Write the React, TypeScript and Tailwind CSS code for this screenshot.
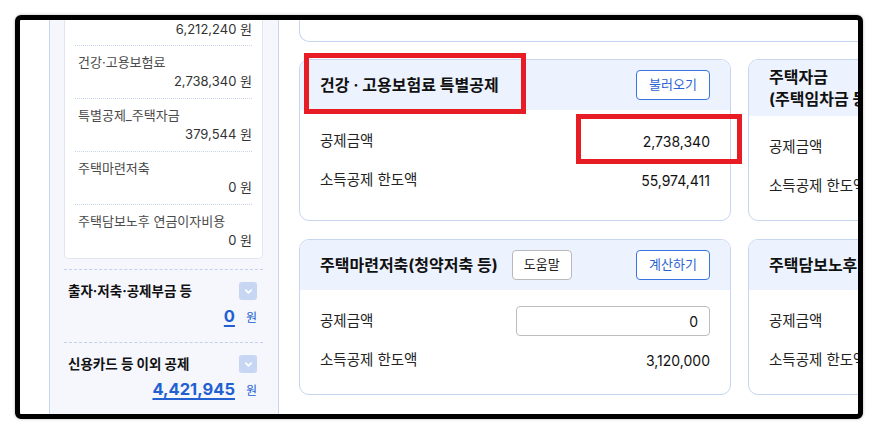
import { ChevronDown } from "lucide-react";

const font = { fontFamily: 'Inter, "Noto Sans CJK KR", "Noto Sans", sans-serif' };

const sideItems = [
  { label: "건강·고용보험료", value: "2,738,340" },
  { label: "특별공제_주택자금", value: "379,544" },
  { label: "주택마련저축", value: "0" },
  { label: "주택담보노후 연금이자비용", value: "0" },
];

function Badge() {
  return (
    <span className="flex h-[18px] w-[18px] shrink-0 items-center justify-center rounded-[3px] bg-[#c6d6f3]">
      <ChevronDown className="h-[11px] w-[11px] text-white" strokeWidth={3.5} />
    </span>
  );
}

function SideSection({ title, amount }: { title: string; amount: string }) {
  return (
    <div className="border-t border-dashed border-[#c3d1ec] pb-[13px] pl-[4px] pr-[6px] pt-[11px]">
      <div className="flex items-center leading-[20px]">
        <span className="flex-1 text-[13.5px] font-bold text-[#111]">{title}</span>
        <Badge />
      </div>
      <div className="mt-[4px] flex items-baseline justify-end gap-[11px] leading-[22px]">
        <span className="text-[16.5px] font-bold text-[#2260d2] underline decoration-[1.5px] underline-offset-[3px]">
          {amount}
        </span>
        <span className="text-[12px] text-[#2260d2]">원</span>
      </div>
    </div>
  );
}

function Sidebar() {
  return (
    <aside className="w-[230px] shrink-0 border-x border-[#c8d6ef] bg-[#f5f7fd] pl-[14px] pr-[15px]">
      <div className="rounded-b-[5px] border border-t-0 border-[#e0e6f1] bg-white px-[10px] text-[13px]">
        <div className="border-b border-dotted border-[#c9d3ea] pb-[6px] text-right leading-[19px] text-[#333]">
          6,212,240 원
        </div>
        {sideItems.map((item, i) => (
          <div
            key={item.label}
            className={`py-[7px] leading-[19px] ${
              i < sideItems.length - 1 ? "border-b border-dotted border-[#c9d3ea]" : "pb-[8px]"
            }`}
          >
            <div className="pl-[3px] text-[#4a4a4a]">{item.label}</div>
            <div className="text-right text-[#333]">{item.value} 원</div>
          </div>
        ))}
      </div>
      <div className="mt-[10px]">
        <SideSection title="출자·저축·공제부금 등" amount="0" />
        <SideSection title="신용카드 등 이외 공제" amount="4,421,945" />
      </div>
    </aside>
  );
}

function BlueButton({ label }: { label: string }) {
  return (
    <button className="h-[30px] w-[74px] shrink-0 rounded-[4px] border border-[#3a74e0] bg-white text-[13px] text-[#2a63d4]">
      {label}
    </button>
  );
}

function Row({ label, children }: { label: string; children: React.ReactNode }) {
  return (
    <div className="flex h-[30px] items-center justify-between text-[14px]">
      <span className="whitespace-nowrap text-[14.5px] text-[#222]">{label}</span>
      {children}
    </div>
  );
}

function Card({
  title,
  extra,
  action,
  children,
}: {
  title: React.ReactNode;
  extra?: React.ReactNode;
  action?: React.ReactNode;
  children: React.ReactNode;
}) {
  return (
    <section className="overflow-hidden rounded-[10px] border border-[#c6d5f0] bg-white">
      <header className="flex min-h-[50px] items-center justify-between bg-[#edf3fe] px-5 py-[6px]">
        <div className="flex items-center gap-[14px]">
          <h3 className="whitespace-nowrap text-[16px] font-bold leading-[22px] text-[#111]">{title}</h3>
          {extra}
        </div>
        {action}
      </header>
      <div className="flex flex-col gap-[9px] px-5 pb-[19px] pt-[16px]">{children}</div>
    </section>
  );
}

export default function App() {
  return (
    <div className="relative h-[434px] w-[879px] overflow-hidden bg-white pl-[15px] pt-[15px]" style={font}>
      <div className="h-[404px] w-[848px] overflow-hidden rounded-[6px] border-[5px] border-black shadow-[0_0_3px_rgba(0,0,0,0.3)]">
        <div className="flex h-full">
          <div className="w-[29px] shrink-0" />
          <Sidebar />

          <main className="min-w-0 flex-1 pl-[20px]">
            {/* bottom edge of the card above */}
            <div className="h-[22px] w-[881px] rounded-b-[10px] border border-t-0 border-[#c6d5f0]" />

            <div className="mt-[17px] grid w-[881px] grid-cols-[432px_432px] gap-x-[17px] gap-y-[18px]">
              <Card title="건강 · 고용보험료 특별공제" action={<BlueButton label="불러오기" />}>
                <Row label="공제금액">
                  <span className="text-[#111]">2,738,340</span>
                </Row>
                <Row label="소득공제 한도액">
                  <span className="text-[#111]">55,974,411</span>
                </Row>
              </Card>

              <Card
                title={
                  <>
                    주택자금
                    <br />
                    (주택임차금 등 원리금상환액)
                  </>
                }
              >
                <Row label="공제금액">
                  <span className="text-[#111]">0</span>
                </Row>
                <Row label="소득공제 한도액">
                  <span className="text-[#111]">0</span>
                </Row>
              </Card>

              <Card
                title="주택마련저축(청약저축 등)"
                extra={
                  <button className="h-[30px] w-[60px] rounded-[4px] border border-[#b9b9b9] bg-white text-[13px] text-[#222]">
                    도움말
                  </button>
                }
                action={<BlueButton label="계산하기" />}
              >
                <Row label="공제금액">
                  <input
                    readOnly
                    value="0"
                    className="h-[30px] w-[194px] rounded-[4px] border border-[#bdbdbd] bg-white pr-[11px] text-right text-[14px] text-[#111] outline-none"
                  />
                </Row>
                <Row label="소득공제 한도액">
                  <span className="text-[#111]">3,120,000</span>
                </Row>
              </Card>

              <Card title="주택담보노후연금 이자비용">
                <Row label="공제금액">
                  <span className="text-[#111]">0</span>
                </Row>
                <Row label="소득공제 한도액">
                  <span className="text-[#111]">0</span>
                </Row>
              </Card>
            </div>
          </main>
        </div>
      </div>

      {/* red highlight boxes */}
      <div className="absolute left-[304px] top-[53px] h-[61px] w-[222px] border-[5px] border-[#e81c24]" />
      <div className="absolute left-[576px] top-[114px] h-[50px] w-[166px] border-[5px] border-[#e81c24]" />
    </div>
  );
}
